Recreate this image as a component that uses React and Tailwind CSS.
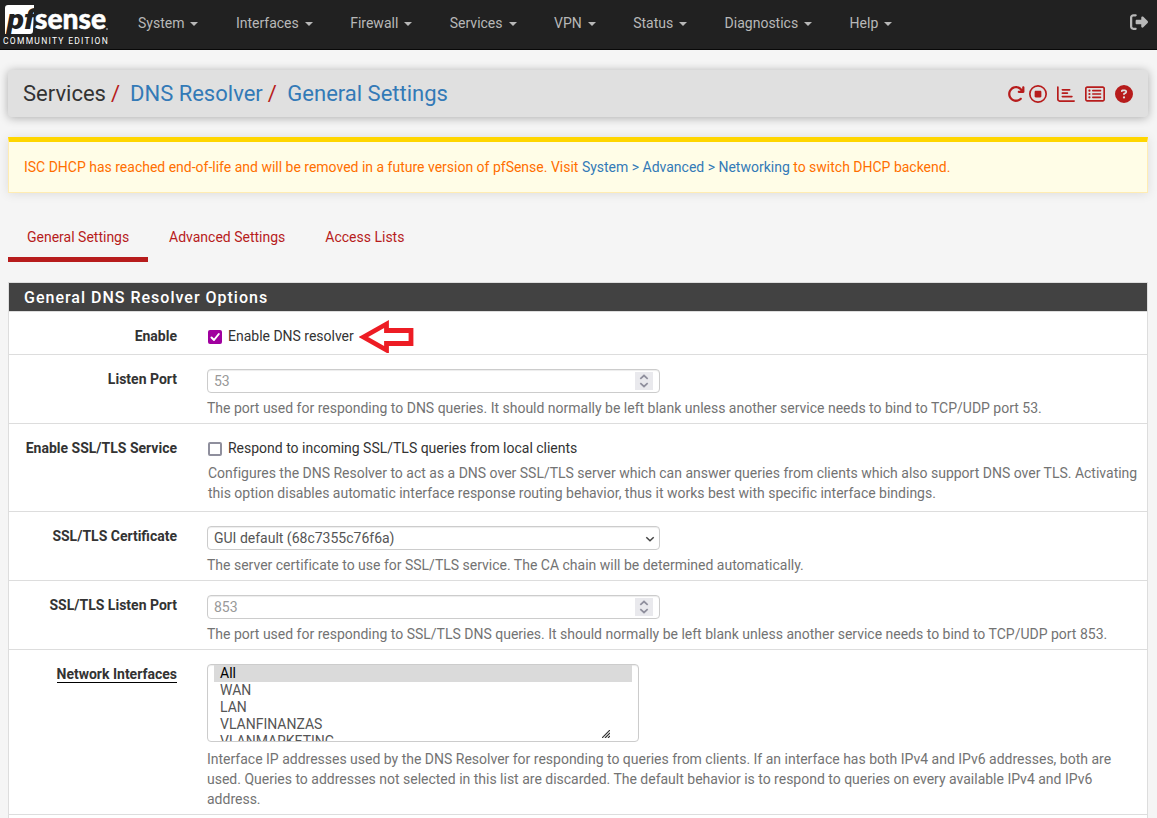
import {
  FaArrowRotateRight,
  FaRegCircleStop,
  FaRegChartBar,
  FaRegRectangleList,
  FaCircleQuestion,
  FaRightFromBracket,
} from 'react-icons/fa6';

const MENUS = ['System', 'Interfaces', 'Firewall', 'Services', 'VPN', 'Status', 'Diagnostics', 'Help'];
const INTERFACES = ['All', 'WAN', 'LAN', 'VLANFINANZAS', 'VLANMARKETING'];

function Logo() {
  return (
    <div className="w-[110px] shrink-0 pl-[3px] pt-[5px]">
      <svg width="106" height="30" viewBox="0 0 106 30" className="block overflow-visible">
        <path d="M5 0H31V3L30 26Q30 29 27 29H2V3Q2 0 5 0Z" fill="#fff" />
        <text x="4" y="23.500" fill="#212121" fontFamily="Roboto, sans-serif" fontWeight="900" fontStyle="italic" fontSize="28" textLength="28" lengthAdjust="spacingAndGlyphs">pf</text>
        <text x="32" y="23.500" fill="#fff" stroke="#fff" strokeWidth="0.5" fontFamily="Lato, sans-serif" fontWeight="900" fontSize="28" textLength="71" lengthAdjust="spacingAndGlyphs">sense</text>
        <circle cx="104" cy="24" r="1" fill="#999" />
      </svg>
      <div className="mt-[1px] whitespace-nowrap text-[8.5px] leading-[10px] tracking-[1.28px] text-white">COMMUNITY EDITION</div>
    </div>
  );
}

function Row({ label, className, underline, children }) {
  return (
    <div className={`flex border-b border-[#ddd] ${className}`}>
      <div className="w-[198px] shrink-0 pr-[30px] text-right font-bold text-[#333]">
        <span className={underline ? 'inline-block h-[19px] border-b border-black leading-[20px]' : ''}>{label}</span>
      </div>
      <div className="min-w-0 flex-1 pr-[8px]">{children}</div>
    </div>
  );
}

function Check({ checked, label }) {
  return (
    <div className="flex items-center">
      <span className={`mt-[2px] ml-[1px] flex size-[14px] items-center justify-center rounded-[2px] ${checked ? 'bg-[#a0009f]' : 'border-2 border-[#8f8f9d] bg-white'}`}>
        {checked && (
          <svg width="14" height="14" viewBox="0 0 14 14" fill="none" stroke="#fff" strokeWidth="2" strokeLinecap="round" strokeLinejoin="round">
            <path d="M3.5 7.5 6 10l4.8-6" />
          </svg>
        )}
      </span>
      <span className="ml-[6px] tracking-[-0.01px]">{label}</span>
    </div>
  );
}

function NumberField({ value }) {
  return (
    <div className="flex h-[24px] w-[453px] items-center justify-between rounded-[4px] border border-[#ccc] bg-white pl-[6px] pr-[6px] text-[#999] shadow-[inset_0_1px_1px_rgba(0,0,0,0.075)]">
      <span>{value}</span>
      <span className="flex h-[18px] w-[18px] items-center justify-center bg-[#e9e9ed]">
        <svg width="10" height="14" viewBox="0 0 10 14" fill="none" stroke="#8f8f9d" strokeWidth="1.7">
          <path d="M1.3 4.8 5 1.5l3.7 3.3M1.3 9.2 5 12.5l3.7-3.3" />
        </svg>
      </span>
    </div>
  );
}

function Help({ children }) {
  return <div className="mt-[5px] tracking-[-0.005px] text-[#737373]">{children}</div>;
}

export default function App() {
  return (
    <div className="h-[818px] overflow-hidden bg-[#f5f5f5] font-['Roboto',sans-serif] text-[14px] leading-[20px] text-[#333]">
      <nav className="flex h-[50px] border-b border-[#080808] bg-[#212121] text-[#b8b8b8]">
        <Logo />
        <div className="ml-[28px] flex items-start gap-[37.45px] pt-[13px]">
          {MENUS.map((m) => (
            <span key={m} className="flex items-center whitespace-nowrap">
              {m}
              <span className="ml-[6px] mt-[2px] border-x-4 border-t-4 border-x-transparent border-t-[#b8b8b8]" />
            </span>
          ))}
        </div>
        <FaRightFromBracket className="ml-auto mr-[9px] mt-[13px] size-[18px] text-[#b8b8b8]" />
      </nav>

      <header className="ml-[8px] mr-[9px] mt-[20px] flex h-[47px] items-center justify-between rounded-[4px] bg-[#e0e0e0] pl-[15px] pr-[15px] shadow-[0_1px_10px_rgba(0,0,0,0.3)]">
        <div className="flex items-center whitespace-nowrap text-[22px] leading-[30px]">
          <span>Services</span>
          <span className="ml-[5px] mr-[11px] text-[#b71c1c]">/</span>
          <span className="-ml-[1px] text-[#337ab7]">DNS Resolver</span>
          <span className="ml-[5px] mr-[11px] text-[#b71c1c]">/</span>
          <span className="-ml-[0.5px] text-[#337ab7]">General Settings</span>
        </div>
        <div className="flex items-center pt-[1px] text-[18px] text-[#b71c1c]">
          <FaArrowRotateRight />
          <FaRegCircleStop className="ml-[4px]" />
          <FaRegChartBar className="ml-[10px]" />
          <FaRegRectangleList className="ml-[10px] h-[20px] w-[20px]" />
          <FaCircleQuestion className="ml-[10px]" />
        </div>
      </header>

      <div className="ml-[8px] mr-[9px] mt-[20px] h-[56px] border border-t-[5px] border-[#ffecb3] border-t-[#ffd600] bg-[#fffde7] pl-[15px] pt-[15px] tracking-[-0.005px] text-[#ff6f00] shadow-[0_1px_10px_rgba(0,0,0,0.1)]">
        ISC DHCP has reached end-of-life and will be removed in a future version of pfSense. Visit{' '}
        <span className="text-[#337ab7]">System &gt; Advanced &gt; Networking</span> to switch DHCP backend.
      </div>

      <div className="ml-[8px] mt-[19px] flex h-[50px] text-[#b71c1c]">
        <div className="w-[140px] border-b-[5px] border-[#b71c1c] pl-[19px] pt-[15px]">General Settings</div>
        <div className="pl-[21px] pt-[15px]">Advanced Settings</div>
        <div className="pl-[40px] pt-[15px]">Access Lists</div>
      </div>

      <section className="ml-[8px] mr-[9px] mt-[20px] border border-[#ddd] bg-white">
        <h2 className="h-[28px] bg-[#424242] pl-[15px] text-[16px] font-medium leading-[29px] tracking-[1px] text-white">
          General DNS Resolver Options
        </h2>
        <Row label="Enable" className="h-[44px] border-t pt-[14px]">
          <div className="flex">
            <Check checked label="Enable DNS resolver" />
            <svg width="56" height="34" viewBox="0 0 56 34" className="-my-[7px] ml-[5px]" fill="#fff" stroke="#ed1c24" strokeWidth="4.800">
              <path d="M4.500 18 27.500 5v6.500h24.500v13H27.500v6.500Z" strokeLinejoin="miter" strokeMiterlimit="3" />
            </svg>
          </div>
        </Row>
        <Row label="Listen Port" className="h-[69px] pt-[14px]">
          <NumberField value="53" />
          <Help>The port used for responding to DNS queries. It should normally be left blank unless another service needs to bind to TCP/UDP port 53.</Help>
        </Row>
        <Row label="Enable SSL/TLS Service" className="h-[88px] pt-[14px]">
          <Check label="Respond to incoming SSL/TLS queries from local clients" />
          <div className="-mr-[4px] ml-[1px]">
            <Help>Configures the DNS Resolver to act as a DNS over SSL/TLS server which can answer queries from clients which also support DNS over TLS. Activating this option disables automatic interface response routing behavior, thus it works best with specific interface bindings.</Help>
          </div>
        </Row>
        <Row label="SSL/TLS Certificate" className="h-[69px] pt-[14px]">
          <div className="flex h-[24px] w-[453px] items-center justify-between rounded-[4px] border border-[#ccc] bg-white pl-[6px] pr-[4px] text-[#555] shadow-[inset_0_1px_1px_rgba(0,0,0,0.075)]">
            <span>GUI default (68c7355c76f6a)</span>
            <svg width="10" height="8" viewBox="0 0 10 8" className="mt-[1px]" fill="none" stroke="#444" strokeWidth="1.5">
              <path d="M1.300 2.200 5 5.800l3.700-3.600" />
            </svg>
          </div>
          <Help>The server certificate to use for SSL/TLS service. The CA chain will be determined automatically.</Help>
        </Row>
        <Row label="SSL/TLS Listen Port" className="h-[69px] pt-[14px]">
          <NumberField value="853" />
          <Help>The port used for responding to SSL/TLS DNS queries. It should normally be left blank unless another service needs to bind to TCP/UDP port 853.</Help>
        </Row>
        <Row label="Network Interfaces" underline className="h-[165px] pt-[14px]">
          <div className="relative h-[78px] w-[432px] overflow-hidden rounded-[4px] border border-[#ccc] bg-white px-[6px] text-[#555] shadow-[inset_0_1px_1px_rgba(0,0,0,0.075)]">
            {INTERFACES.map((name, i) => (
              <div key={name} className={`h-[17px] pl-[6px] leading-[17px] ${i === 0 ? 'bg-[#dadada] text-black' : ''}`}>
                {name}
              </div>
            ))}
            <svg width="8" height="8" viewBox="0 0 8 8" className="absolute bottom-[3px] right-[28px]" stroke="#333" strokeWidth="1.2">
              <path d="M0 8 8 0M3 8 8 3M6 8 8 6" />
            </svg>
          </div>
          <div className="mt-[7px] pr-[16px] tracking-[-0.005px] text-[#737373]">
            Interface IP addresses used by the DNS Resolver for responding to queries from clients. If an interface has both IPv4 and IPv6 addresses, both are used. Queries to addresses not selected in this list are discarded. The default behavior is to respond to queries on every available IPv4 and IPv6 address.
          </div>
        </Row>
        <div className="h-[20px]" />
      </section>
    </div>
  );
}
